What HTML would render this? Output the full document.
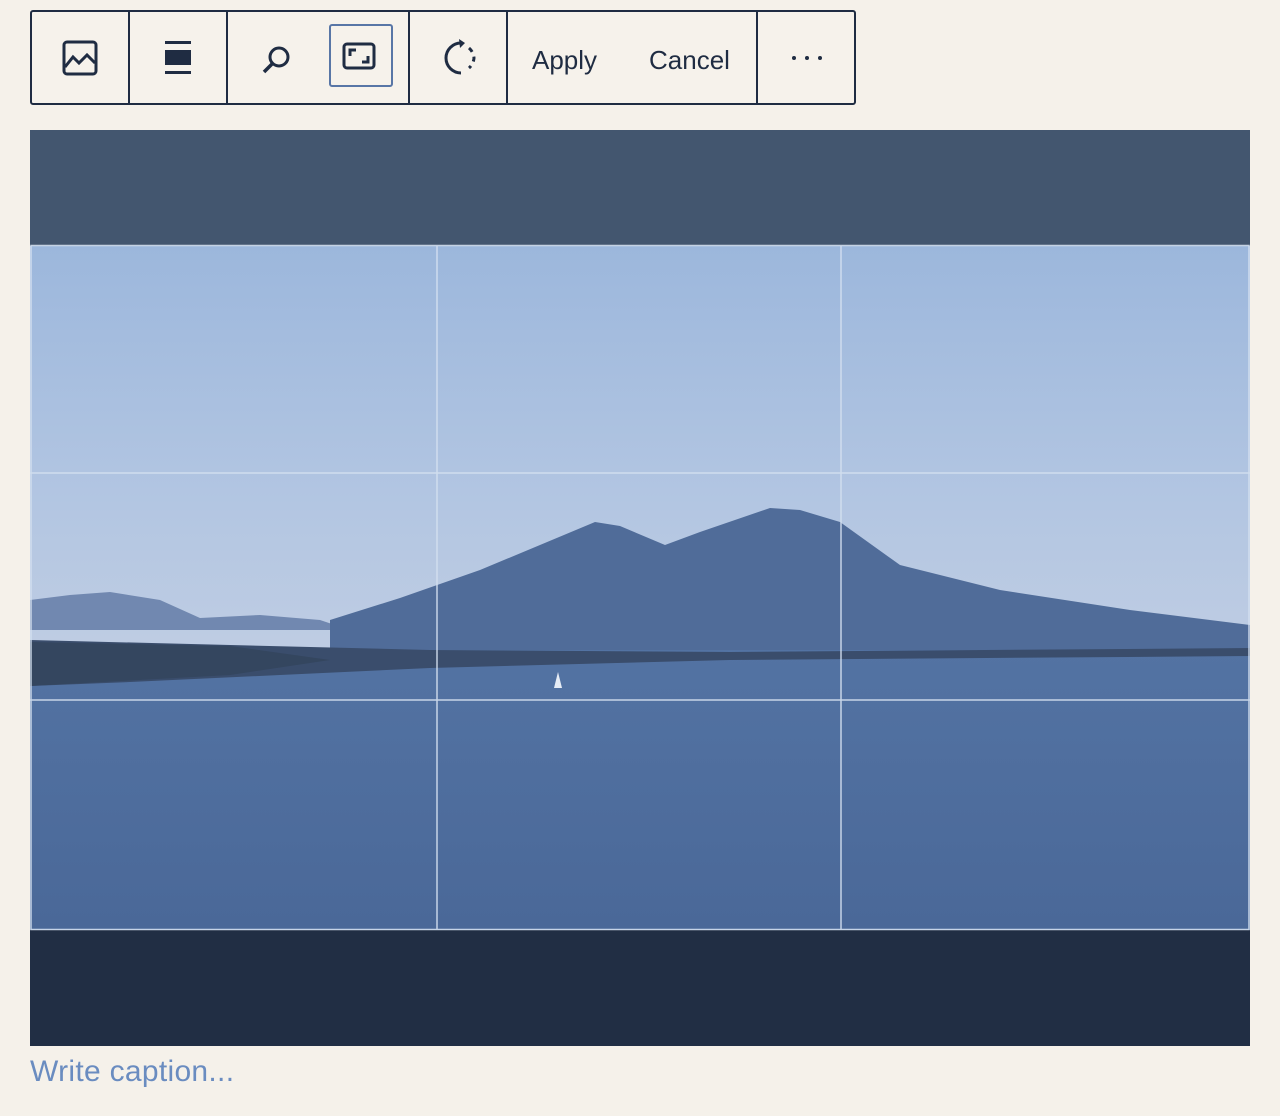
<!DOCTYPE html>
<html><head><meta charset="utf-8"><style>
html,body{margin:0;padding:0;background:#f5f1ea;width:1280px;height:1116px;overflow:hidden;font-family:"Liberation Sans",sans-serif}
.tb{position:absolute;left:30px;top:10px;width:822px;height:91px;border:2px solid #1f2c42;border-radius:3px;background:#f6f2eb}
.dv{position:absolute;top:0;width:2px;height:91px;background:#1f2c42}
.t{position:absolute;top:33px;font-size:26px;color:#1f2c42}
.act{position:absolute;left:297px;top:12px;width:60px;height:59px;border:2px solid #5876a6;border-radius:3px}
.img{position:absolute;left:30px;top:130px;width:1220px;height:916px}
.cap{position:absolute;left:30px;top:1055px;font-size:30px;color:#6a8cc0;letter-spacing:0.3px}
</style></head><body>
<div class="tb">
 <svg style="position:absolute;left:29px;top:27px" width="38" height="38" viewBox="0 0 38 38"><rect x="3" y="3" width="32" height="32" rx="3" fill="none" stroke="#1f2c42" stroke-width="3"/><path d="M4 28 L12 18 L18 24 L26 16 L34 24" fill="none" stroke="#1f2c42" stroke-width="3"/></svg>
 <div class="dv" style="left:96px"></div>
 <svg style="position:absolute;left:131px;top:29px" width="30" height="36"><rect x="2" y="0" width="26" height="3" fill="#1f2c42"/><rect x="2" y="9" width="26" height="15" fill="#1f2c42"/><rect x="2" y="30" width="26" height="3" fill="#1f2c42"/></svg>
 <div class="dv" style="left:194px"></div>
 <svg style="position:absolute;left:229px;top:33px" width="32" height="30"><circle cx="18" cy="12" r="9" fill="none" stroke="#1f2c42" stroke-width="3"/><path d="M11 19 L3 27" stroke="#1f2c42" stroke-width="3.5"/></svg>
 <div class="act"></div>
 <svg style="position:absolute;left:310px;top:30px" width="36" height="30"><rect x="2" y="2" width="30" height="24" rx="3" fill="none" stroke="#1f2c42" stroke-width="3"/><path d="M8 14 V8 H14 M20 20 H26 V14" fill="none" stroke="#1f2c42" stroke-width="3"/></svg>
 <div class="dv" style="left:376px"></div>
 <svg style="position:absolute;left:407px;top:26px" width="40" height="40" viewBox="0 0 40 40"><path d="M22 5 A15 15 0 1 0 22 35" fill="none" stroke="#1f2c42" stroke-width="3"/><path d="M30 10 A15 15 0 0 1 35 20 A15 15 0 0 1 30 30" fill="none" stroke="#1f2c42" stroke-width="3" stroke-dasharray="5 5"/><path d="M20 1 L26 5 L21 10" fill="#1f2c42"/></svg>
 <div class="dv" style="left:474px"></div>
 <div class="t" style="left:500px">Apply</div>
 <div class="t" style="left:617px">Cancel</div>
 <div class="dv" style="left:724px"></div>
 <svg style="position:absolute;left:758px;top:42px" width="36" height="8"><circle cx="4" cy="4" r="2" fill="#1f2c42"/><circle cx="17" cy="4" r="2" fill="#1f2c42"/><circle cx="30" cy="4" r="2" fill="#1f2c42"/></svg>
</div>
<svg class="img" viewBox="0 0 1220 916">
 <defs>
  <linearGradient id="sky" x1="0" y1="0" x2="0" y2="1"><stop offset="0" stop-color="#9cb7dc"/><stop offset="0.5" stop-color="#b3c6e2"/><stop offset="1" stop-color="#c8d2e4"/></linearGradient>
  <linearGradient id="sea" x1="0" y1="0" x2="0" y2="1"><stop offset="0" stop-color="#5373a3"/><stop offset="1" stop-color="#4a6898"/></linearGradient>
 </defs>
 <rect x="0" y="0" width="1220" height="116" fill="#43566f"/>
 <rect x="0" y="116" width="1220" height="520" fill="url(#sky)"/>
 <path d="M0 470 L40 465 L80 462 L130 470 L170 488 L230 485 L290 490 L320 500 L0 500Z" fill="#7188b0"/>
 <path d="M300 490 L370 468 L450 440 L565 392 L590 396 L635 415 L670 402 L740 378 L770 380 L810 392 L870 435 L970 460 L1100 480 L1220 495 L1220 530 L300 530Z" fill="#506c99"/>
 <rect x="0" y="520" width="1220" height="280" fill="url(#sea)"/>
 <path d="M0 510 L400 520 L700 522 L1220 518 L1220 526 L700 530 L400 538 L250 545 L100 552 L0 556Z" fill="#3a4d6c"/>
 <path d="M0 512 L200 516 L300 530 L200 545 L0 556Z" fill="#34465f"/>
 <rect x="0" y="800" width="1220" height="116" fill="#212e44"/>
 <g stroke="#d4e0f0" stroke-width="1.5" fill="none" opacity="0.9">
  <rect x="1" y="115.5" width="1218" height="684"/>
  <line x1="407" y1="116" x2="407" y2="800"/>
  <line x1="811" y1="116" x2="811" y2="800"/>
  <line x1="0" y1="343" x2="1220" y2="343"/>
  <line x1="0" y1="570" x2="1220" y2="570"/>
 </g>
 <path d="M528 542 L524 558 L532 558Z" fill="#e6ecf5"/>
</svg>
<div class="cap">Write caption...</div>
</body></html>
